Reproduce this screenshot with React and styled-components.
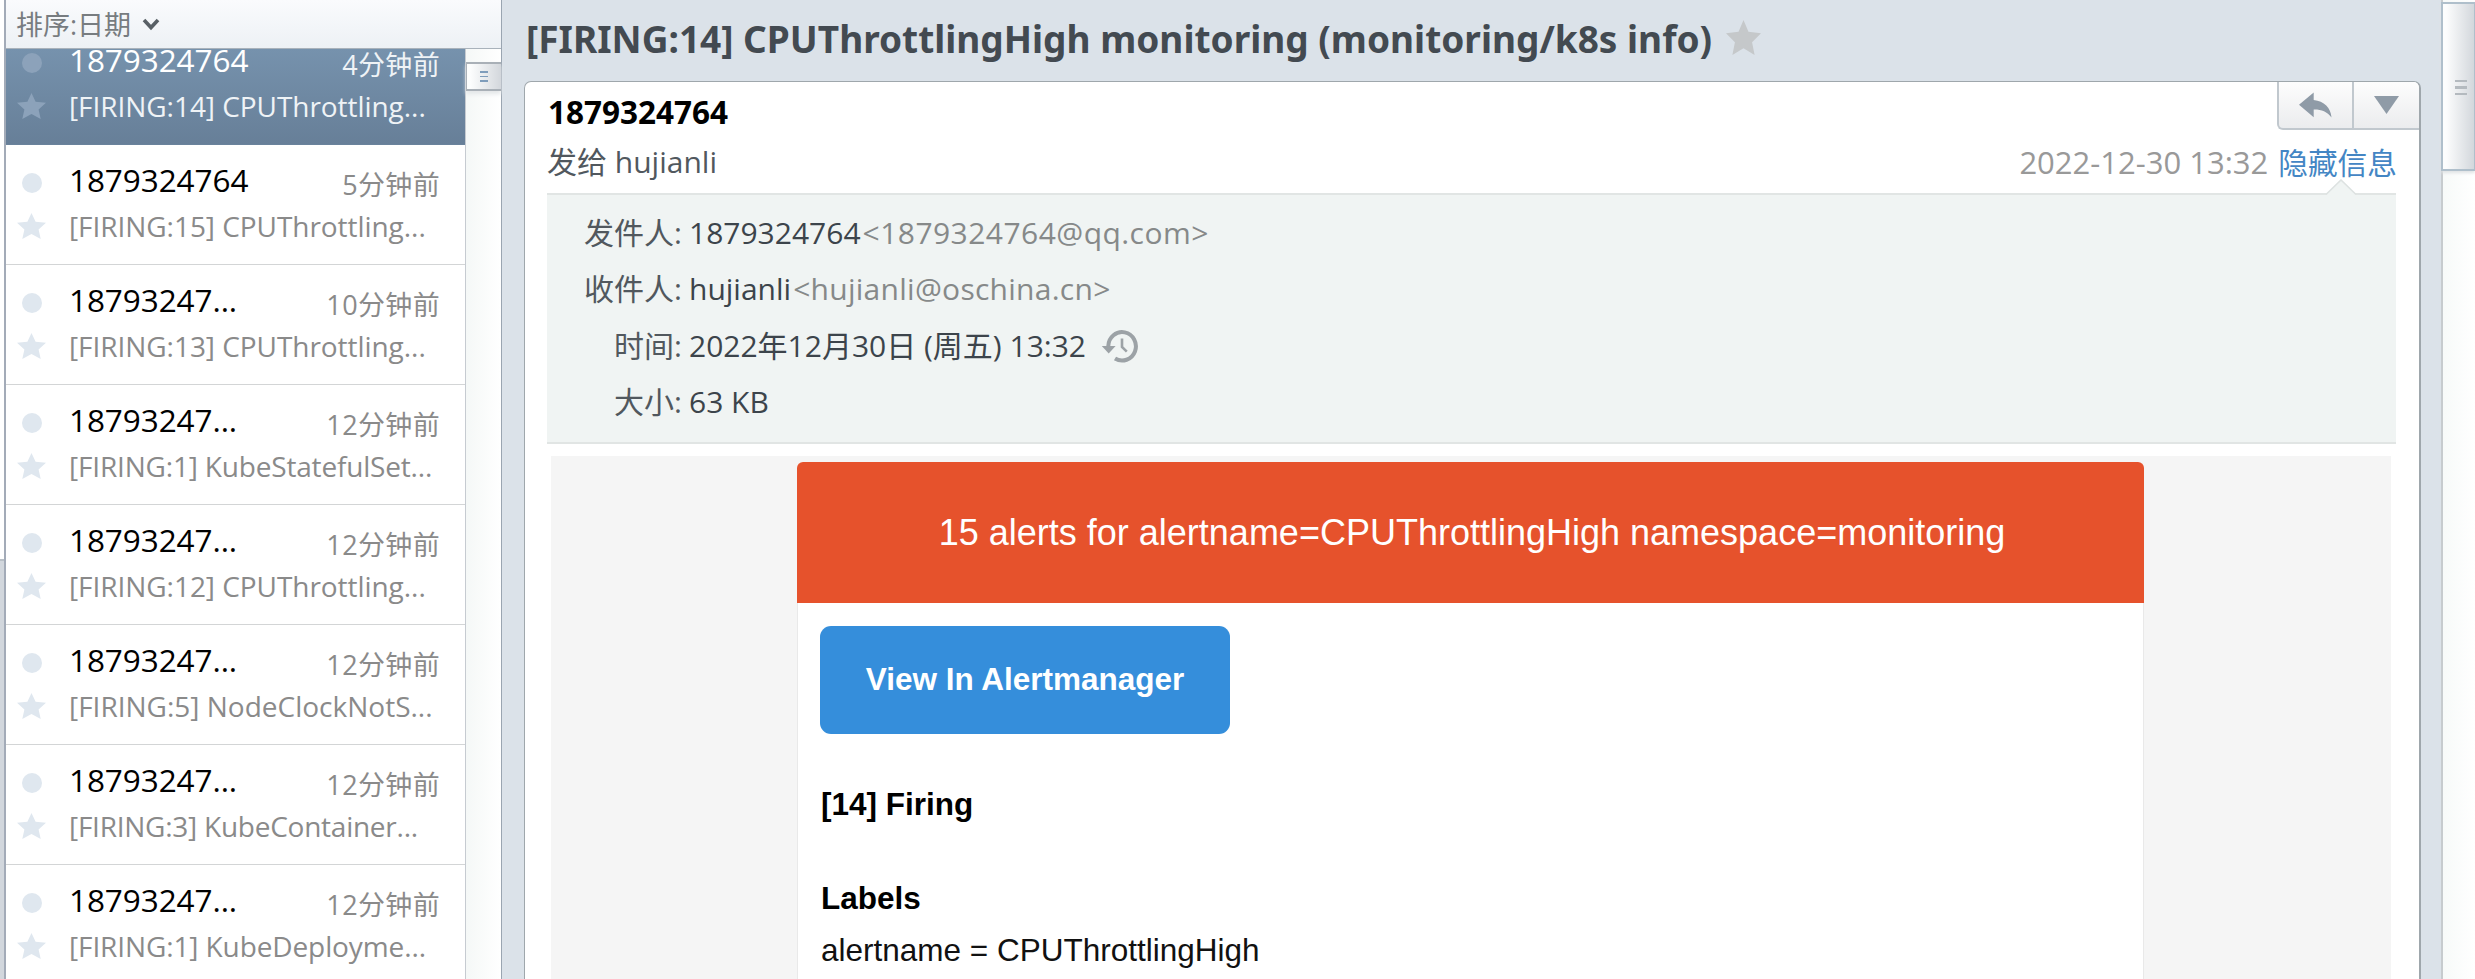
import React from "react";
import styled, { createGlobalStyle, css } from "styled-components";

const GlobalStyle = createGlobalStyle`
  * { box-sizing: border-box; }
  body { margin: 0; overflow: hidden; }
`;

const uiFont = `"Open Sans", "Noto Sans CJK SC", sans-serif`;
const mailFont = `"Liberation Sans", Arial, sans-serif`;

const Page = styled.div`
  display: flex;
  width: 100%;
  height: 979px;
  overflow: hidden;
  background: #dbe2e9;
  font-family: ${uiFont};
`;

/* Edge of the folder sidebar */
const SidebarEdge = styled.div`
  display: flex;
  flex-direction: column;
  flex: 0 0 4px;
  background: #fff;
`;
const SidebarFooter = styled.div`
  flex: 1;
  margin-top: 559px;
  border-top: 2px solid #b9c0c7;
  background: #d2d7dd;
`;

/* Message list */
const ListPane = styled.section`
  display: flex;
  flex-direction: column;
  flex: 0 0 498px;
  border-left: 2px solid #a3abb8;
  border-right: 1px solid #9aa5b1;
  background: #fff;
`;
const SortBar = styled.header`
  display: flex;
  align-items: center;
  flex: 0 0 49px;
  gap: 11px;
  padding: 2px 0 0 10px;
  border-bottom: 1px solid #a9b2bb;
  background: linear-gradient(#fafbfd, #edf1f5);
  color: #777c80;
  font-size: 27px;
  line-height: 44px;
`;
const ListBody = styled.div`
  display: flex;
  flex: 1;
  min-height: 0;
`;
const Messages = styled.div`
  flex: 1;
  min-width: 0;
  overflow: hidden;
  border-right: 1px solid #c6cbd1;
`;
const ScrolledMessages = styled.div`
  margin-top: -24px;
`;
const MessageRow = styled.article`
  display: flex;
  height: 120px;
  border-bottom: 1px solid #d3d5d6;
  --name: #000;
  --meta: #8a8a8a;
  --mark: #dfe7ef;
  ${(p) =>
    p.$selected &&
    css`
      border-bottom-color: #6a839c;
      background: linear-gradient(#7692ad 20%, #677f98);
      --name: #fff;
      --meta: #eff3f6;
      --mark: #8ca2ba;
    `}
`;
const Marks = styled.div`
  display: flex;
  flex-direction: column;
  align-items: center;
  flex: 0 0 51px;
  padding-top: 28px;
`;
const UnreadDot = styled.i`
  width: 20px;
  height: 20px;
  border-radius: 50%;
  background: var(--mark);
`;
const RowStar = styled.svg`
  width: 29px;
  height: 26px;
  margin-top: 20px;
  fill: var(--mark);
`;
const Summary = styled.div`
  flex: 1;
  min-width: 0;
  padding: 15px 25px 0 12px;
  white-space: nowrap;
`;
const SummaryTop = styled.div`
  display: flex;
  justify-content: space-between;
`;
const Sender = styled.div`
  color: var(--name);
  font-size: 31.5px;
  font-weight: 500;
  line-height: 40px;
  letter-spacing: -0.08px;
`;
const Age = styled.time`
  padding-top: 5px;
  color: var(--meta);
  font-size: 27px;
  line-height: 40px;
  letter-spacing: 0.35px;
`;
const Subject = styled.div`
  margin-top: 1px;
  color: var(--meta);
  font-size: 28px;
  line-height: 40px;
  letter-spacing: ${(p) => p.$tracking || 0}px;
`;

/* Scrollbars */
const ListTrack = styled.div`
  flex: 0 0 35px;
  padding-top: 13px;
  background: linear-gradient(90deg, #f5f8f7, #fff);
`;
const Thumb = styled.div`
  display: flex;
  flex-direction: column;
  align-items: center;
  justify-content: center;
  background: linear-gradient(90deg, #fcfdfd 10%, #d3d7dc);
`;
const ListThumb = styled(Thumb)`
  height: 29px;
  gap: 3px;
  border: solid #a9b0b7;
  border-width: 2px 0 2px 1px;
  box-shadow: 0 3px 4px #e3e6e8;
`;
const MainTrack = styled.div`
  flex: 0 0 34px;
  padding-top: 2px;
  border-left: 2px solid #c6cbce;
  background: linear-gradient(90deg, #f7faf9, #fff);
`;
const MainThumb = styled(Thumb)`
  height: 169px;
  margin-left: -2px;
  padding: 2px 0 0 4px;
  gap: 4px;
  border: 2px solid #afbfcb;
  border-right-width: 1px;
  box-shadow: 0 2px 3px #dfe2e4;
`;
const Grip = styled.i`
  width: ${(p) => p.$width}px;
  height: ${(p) => p.$thick}px;
  background: ${(p) => p.$color};
`;

/* Reader */
const Reader = styled.main`
  display: flex;
  flex-direction: column;
  flex: 1;
  min-width: 0;
  padding: 0 20px 0 22px;
`;
const TitleBar = styled.header`
  display: flex;
  flex: 0 0 81px;
  gap: 14px;
  padding: 14px 0 0 2px;
`;
const Title = styled.h1`
  margin: 0;
  color: #434a51;
  font-family: "Noto Sans", sans-serif;
  font-size: 37px;
  font-weight: 700;
  line-height: 50px;
  white-space: nowrap;
`;
const TitleStar = styled.svg`
  width: 35px;
  height: 35px;
  margin-top: 6px;
  fill: #c5c8ca;
`;
const Card = styled.article`
  display: flex;
  flex-direction: column;
  flex: 1;
  min-height: 0;
  overflow: hidden;
  border: 1px solid #9fa7ac;
  border-right-width: 2px;
  border-bottom: 0;
  border-radius: 7px 7px 0 0;
  background: #fff;
`;
const CardTop = styled.div`
  display: flex;
  justify-content: space-between;
  flex: 0 0 52px;
  padding-left: 23px;
`;
const From = styled.div`
  padding-top: 8px;
  color: #000;
  font-size: 31.5px;
  font-weight: 700;
  line-height: 44px;
`;
const Actions = styled.div`
  display: flex;
  width: 142px;
  height: 48px;
  border: 2px solid #c1c8ce;
  border-top: 0;
  border-right: 0;
  border-radius: 0 0 0 6px;
  background: linear-gradient(#fdfdfd, #ebecee);
`;
const Action = styled.button`
  display: flex;
  align-items: center;
  justify-content: center;
  flex: 0 0 ${(p) => p.$width}px;
  padding: 0;
  border: 0;
  background: none;
  & + & {
    border-left: 2px solid #c1c8ce;
  }
  svg {
    fill: #8f9ba7;
  }
`;
const Delivery = styled.div`
  display: flex;
  justify-content: space-between;
  flex: 0 0 44px;
  margin: 6px 22px 8px;
  color: #51585e;
  font-size: 30px;
  line-height: 44px;
`;
const SentAt = styled.span`
  color: #999;
  font-size: 31px;
`;
const ToggleLink = styled.a`
  margin-left: 10px;
  color: #4486c4;
  font-size: 29.7px;
`;
const Info = styled.div`
  position: relative;
  flex: 0 0 251px;
  margin: 0 23px 0 22px;
  padding-top: 9.5px;
  border: solid #e1e5e4;
  border-width: 2px 0;
  background: #f0f4f3;
`;
const Pointer = styled.svg`
  position: absolute;
  top: -16px;
  right: 39px;
  width: 32px;
  height: 17px;
`;
const InfoRow = styled.div`
  display: flex;
  height: 56.5px;
  color: #3c444b;
  font-size: 30px;
  line-height: 56.5px;
  white-space: nowrap;
`;
const InfoLabel = styled.span`
  width: 135px;
  margin-right: 7px;
  text-align: right;
  color: #51585e;
`;
const Address = styled.span`
  margin-left: 2px;
  color: #868989;
  letter-spacing: ${(p) => p.$tracking}px;
`;
const HistoryIcon = styled.svg`
  width: 40px;
  height: 36px;
  margin: 10.5px 0 0 14px;
  fill: none;
  stroke: #9ca2a6;
`;

/* Mail contents */
const MailBody = styled.div`
  flex: 1;
  margin: 12px 28px 0 26px;
  padding: 6px 0 0 246px;
  background: #f5f5f5;
  font-family: ${mailFont};
`;
const Mail = styled.div`
  width: 1347px;
  height: 100%;
  border-radius: 6px 6px 0 0;
  overflow: hidden;
  background: #fff;
`;
const Banner = styled.div`
  height: 141px;
  padding-left: 3px;
  background: #e6522c;
  color: #fff;
  font-size: 36px;
  line-height: 141px;
  text-align: center;
`;
const MailText = styled.div`
  height: 100%;
  padding: 23px 0 0 22px;
  border: solid #e9e9e9;
  border-width: 0 1px;
  color: #000;
  font-size: 31.5px;
  line-height: 36px;
`;
const ViewButton = styled.a`
  display: block;
  width: 410px;
  height: 108px;
  border-radius: 11px;
  background: #358edb;
  color: #fff;
  font-size: 31.5px;
  font-weight: 700;
  line-height: 107px;
  text-align: center;
`;
const Heading = styled.h2`
  margin: ${(p) => p.$gap}px 0 0 1px;
  font-size: inherit;
  font-weight: 700;
`;
const LabelLine = styled.p`
  margin: 15.5px 0 0 1px;
  color: #111;
`;

const starPoints =
  "14.5,0 18.6,8.7 29,9.8 21.6,16.6 23.7,26 14.5,21 5.3,26 7.4,16.6 0,9.8 10.4,8.7";

const messages = [
  { sender: "1879324764", age: "4分钟前", subject: "[FIRING:14] CPUThrottling...", selected: true, tracking: -0.05 },
  { sender: "1879324764", age: "5分钟前", subject: "[FIRING:15] CPUThrottling...", tracking: -0.05 },
  { sender: "18793247...", age: "10分钟前", subject: "[FIRING:13] CPUThrottling...", tracking: -0.05 },
  { sender: "18793247...", age: "12分钟前", subject: "[FIRING:1] KubeStatefulSet...", tracking: -0.18 },
  { sender: "18793247...", age: "12分钟前", subject: "[FIRING:12] CPUThrottling...", tracking: -0.05 },
  { sender: "18793247...", age: "12分钟前", subject: "[FIRING:5] NodeClockNotS..." },
  { sender: "18793247...", age: "12分钟前", subject: "[FIRING:3] KubeContainer...", tracking: -0.25 },
  { sender: "18793247...", age: "12分钟前", subject: "[FIRING:1] KubeDeployme...", tracking: -0.11 },
];

function Message({ sender, age, subject, selected, tracking }) {
  return (
    <MessageRow $selected={selected}>
      <Marks>
        <UnreadDot />
        <RowStar viewBox="0 0 29 26">
          <polygon points={starPoints} />
        </RowStar>
      </Marks>
      <Summary>
        <SummaryTop>
          <Sender>{sender}</Sender>
          <Age>{age}</Age>
        </SummaryTop>
        <Subject $tracking={tracking}>{subject}</Subject>
      </Summary>
    </MessageRow>
  );
}

function Grips({ width, thick, color }) {
  return [0, 1, 2].map((n) => <Grip key={n} $width={width} $thick={thick} $color={color} />);
}

export default function App() {
  return (
    <Page>
      <GlobalStyle />
      <SidebarEdge>
        <SidebarFooter />
      </SidebarEdge>
      <ListPane>
        <SortBar>
          <span>排序:日期</span>
          <svg width="18" height="14" viewBox="0 0 18 14" fill="none" stroke="#596066" strokeWidth="3.6">
            <path d="M2 2 9 9.5 16 2" />
          </svg>
        </SortBar>
        <ListBody>
          <Messages>
            <ScrolledMessages>
              {messages.map((m, i) => (
                <Message key={i} {...m} />
              ))}
            </ScrolledMessages>
          </Messages>
          <ListTrack>
            <ListThumb>
              <Grips width={8} thick={1.5} color="#7f9dbb" />
            </ListThumb>
          </ListTrack>
        </ListBody>
      </ListPane>
      <Reader>
        <TitleBar>
          <Title>[FIRING:14] CPUThrottlingHigh monitoring (monitoring/k8s info)</Title>
          <TitleStar viewBox="0 0 29 26" preserveAspectRatio="none">
            <polygon points={starPoints} />
          </TitleStar>
        </TitleBar>
        <Card>
          <CardTop>
            <From>1879324764</From>
            <Actions>
              <Action $width={73}>
                <svg width="33" height="26" viewBox="0 0 33 26">
                  <path d="M0 12.7 14.7.5V8C25 9 32 16 32.5 25.5 28 19.5 22 17.3 14.7 17.5V25.3Z" />
                </svg>
              </Action>
              <Action $width={67}>
                <svg width="25" height="18" viewBox="0 0 25 18">
                  <path d="M0 0H25L12.5 18Z" />
                </svg>
              </Action>
            </Actions>
          </CardTop>
          <Delivery>
            <span>发给 hujianli</span>
            <span>
              <SentAt>2022-12-30 13:32</SentAt>
              <ToggleLink>隐藏信息</ToggleLink>
            </span>
          </Delivery>
          <Info>
            <Pointer viewBox="0 0 32 17">
              <path d="M1 16 16 1 31 16V17H1Z" fill="#f0f4f3" />
              <path d="M1 15.5 16 1 31 15.5" fill="none" stroke="#dde2e1" strokeWidth="1.6" />
            </Pointer>
            <InfoRow>
              <InfoLabel>发件人:</InfoLabel>
              1879324764
              <Address $tracking={0.46}>&lt;1879324764@qq.com&gt;</Address>
            </InfoRow>
            <InfoRow>
              <InfoLabel>收件人:</InfoLabel>
              hujianli
              <Address $tracking={0.27}>&lt;hujianli@oschina.cn&gt;</Address>
            </InfoRow>
            <InfoRow>
              <InfoLabel>时间:</InfoLabel>
              2022年12月30日 (周五) 13:32
              <HistoryIcon viewBox="0 0 40 36">
                <path d="M8.3 18A13.8 14.2 0 1 1 15 30.5" strokeWidth="4" />
                <path d="M22 10.5V19L26.8 23.6" strokeWidth="2.6" />
                <path d="M1.8 18H15.6L8.7 25.5Z" fill="#9ca2a6" stroke="none" />
              </HistoryIcon>
            </InfoRow>
            <InfoRow>
              <InfoLabel>大小:</InfoLabel>
              63 KB
            </InfoRow>
          </Info>
          <MailBody>
            <Mail>
              <Banner>15 alerts for alertname=CPUThrottlingHigh namespace=monitoring</Banner>
              <MailText>
                <ViewButton>View In Alertmanager</ViewButton>
                <Heading $gap={52}>[14] Firing</Heading>
                <Heading $gap={58}>Labels</Heading>
                <LabelLine>alertname = CPUThrottlingHigh</LabelLine>
              </MailText>
            </Mail>
          </MailBody>
        </Card>
      </Reader>
      <MainTrack>
        <MainThumb>
          <Grips width={12} thick={2.5} color="#b4babf" />
        </MainThumb>
      </MainTrack>
    </Page>
  );
}
